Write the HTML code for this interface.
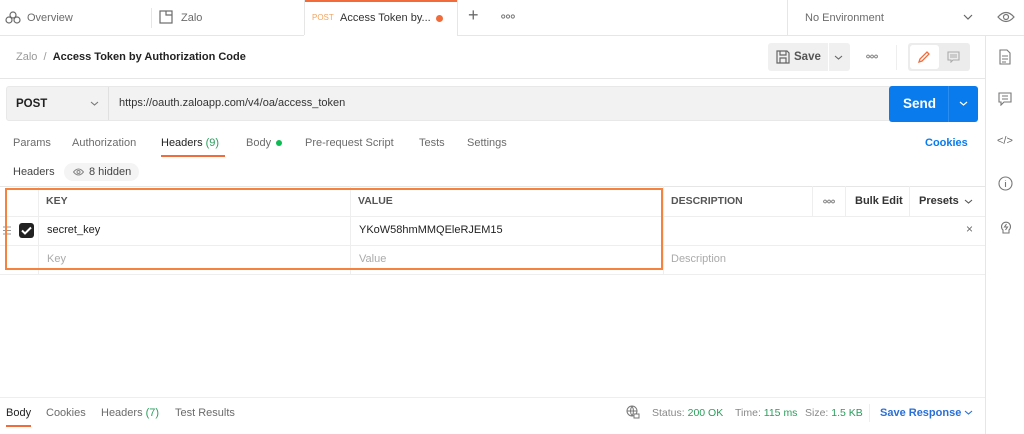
<!DOCTYPE html>
<html><head><style>
*{box-sizing:border-box;margin:0;padding:0}
body{width:1024px;height:434px;background:#fff;font-family:"Liberation Sans",sans-serif;font-size:11px;color:#212121;position:relative;overflow:hidden}
.a{position:absolute}
.g{color:#6b6b6b}
.hl{position:absolute;height:1px;background:#e6e6e6}
.vl{position:absolute;width:1px;background:#e6e6e6}
</style></head><body>
<!-- top tabs -->
<div class="hl" style="left:0;top:35px;width:1024px"></div>
<div class="vl" style="left:151px;top:8px;height:20px"></div>
<div class="vl" style="left:304px;top:0;height:35px"></div>
<div class="vl" style="left:457px;top:0;height:35px"></div>
<div class="vl" style="left:787px;top:0;height:35px"></div>
<div class="a" style="left:305px;top:0;width:152px;height:2px;background:#f26b3a"></div>
<div class="a" style="left:304px;top:35px;width:153px;height:1px;background:#fff"></div>
<svg class="a" style="left:5px;top:11px" width="16" height="14" viewBox="0 0 16 14" fill="none" stroke="#6b6b6b" stroke-width="1.2"><circle cx="4" cy="9" r="3"/><circle cx="12" cy="9" r="3"/><circle cx="8" cy="4" r="3"/></svg>
<div class="a g" style="left:27px;top:12px;font-size:11px">Overview</div>
<svg class="a" style="left:159px;top:10px" width="14" height="14" viewBox="0 0 14 14" fill="none" stroke="#6b6b6b" stroke-width="1.2"><rect x="1" y="1" width="12" height="12"/><path d="M7 1v4h6"/></svg>
<div class="a g" style="left:181px;top:12px">Zalo</div>
<div class="a" style="left:312px;top:13px;font-size:8px;color:#f5a45e">POST</div>
<div class="a" style="left:340px;top:12px;color:#333">Access Token by...</div>
<div class="a" style="left:436px;top:15px;width:7px;height:7px;border-radius:50%;background:#f26b3a"></div>
<div class="a g" style="left:468px;top:5px;font-size:18px;font-weight:300">+</div>
<svg class="a" style="left:501px;top:14px" width="14" height="5" viewBox="0 0 14 5" fill="none" stroke="#777" stroke-width="1"><circle cx="2.2" cy="2.5" r="1.6"/><circle cx="7" cy="2.5" r="1.6"/><circle cx="11.8" cy="2.5" r="1.6"/></svg>
<div class="a g" style="left:805px;top:12px">No Environment</div>
<svg class="a" style="left:963px;top:14px" width="10" height="6" viewBox="0 0 10 6" fill="none" stroke="#666" stroke-width="1.2"><path d="M1 1l4 4 4-4"/></svg>
<svg class="a" style="left:997px;top:11px" width="18" height="12" viewBox="0 0 18 12" fill="none" stroke="#777" stroke-width="1.2"><path d="M1 6Q9-3 17 6Q9 15 1 6z"/><circle cx="9" cy="6" r="2.5"/></svg>
<!-- right sidebar -->
<div class="vl" style="left:985px;top:35px;height:399px"></div>
<svg class="a" style="left:999px;top:49px" width="12" height="16" viewBox="0 0 12 16" fill="none" stroke="#777" stroke-width="1.1"><path d="M1 1h7l3 3v11H1z"/><path d="M3 7h6M3 10h6M3 13h4"/></svg>
<svg class="a" style="left:998px;top:92px" width="14" height="14" viewBox="0 0 14 14" fill="none" stroke="#777" stroke-width="1.1"><path d="M1 1h12v9H6l-3 3v-3H1z"/><path d="M4 4h6M4 7h6"/></svg>
<div class="a g" style="left:997px;top:135px;font-size:11px">&lt;/&gt;</div>
<svg class="a" style="left:998px;top:176px" width="15" height="15" viewBox="0 0 15 15" fill="none" stroke="#777" stroke-width="1.1"><circle cx="7.5" cy="7.5" r="6.5"/><path d="M7.5 6v5M7.5 4v.5"/></svg>
<svg class="a" style="left:998px;top:219px" width="16" height="16" viewBox="0 0 16 16" fill="none" stroke="#777" stroke-width="1.1"><path d="M5 11a4.5 4.5 0 1 1 6 0v3H5z"/><path d="M8.5 5l-2 3h3l-2 3"/></svg>
<!-- breadcrumb -->
<div class="a" style="left:16px;top:51px;font-size:11px"><span style="color:#999">Zalo</span> <span style="color:#999">&nbsp;/&nbsp;</span> <b style="color:#222">Access Token by Authorization Code</b></div>
<div class="a" style="left:768px;top:43px;width:82px;height:28px;background:#f0f0f0;border-radius:3px"></div>
<div class="vl" style="left:828px;top:43px;height:28px;background:#fff"></div>
<svg class="a" style="left:776px;top:50px" width="14" height="14" viewBox="0 0 14 14" fill="none" stroke="#666" stroke-width="1.2"><path d="M1 1h10l2 2v10H1z"/><path d="M4 1v4h6V1M4 13V8h6v5"/></svg>
<div class="a" style="left:794px;top:51px;font-weight:bold;color:#555;font-size:11.5px">Save</div>
<svg class="a" style="left:834px;top:55px" width="9" height="5" viewBox="0 0 9 5" fill="none" stroke="#666" stroke-width="1.1"><path d="M1 1l3.5 3 3.5-3"/></svg>
<svg class="a" style="left:866px;top:54px" width="12" height="5" viewBox="0 0 12 5" fill="none" stroke="#777" stroke-width="0.9"><circle cx="2" cy="2.5" r="1.4"/><circle cx="6" cy="2.5" r="1.4"/><circle cx="10" cy="2.5" r="1.4"/></svg>
<div class="vl" style="left:896px;top:45px;height:25px;background:#eee"></div>
<div class="a" style="left:908px;top:43px;width:62px;height:28px;background:#ececec;border-radius:3px"></div>
<div class="a" style="left:910px;top:45px;width:29px;height:24px;background:#fff;border-radius:3px"></div>
<svg class="a" style="left:917px;top:50px" width="14" height="14" viewBox="0 0 14 14" fill="none" stroke="#f26b3a" stroke-width="1.3"><path d="M2 12l1-3 7-7 2 2-7 7z"/></svg>
<svg class="a" style="left:947px;top:51px" width="13" height="12" viewBox="0 0 13 12" fill="none" stroke="#aaa" stroke-width="1.1"><path d="M1 1h11v8H6l-2 2V9H1z"/><path d="M3 4h7M3 6h7"/></svg>
<div class="hl" style="left:0;top:78px;width:985px"></div>
<!-- URL bar -->
<div class="a" style="left:6px;top:86px;width:964px;height:35px;background:#f2f2f2;border:1px solid #e8e8e8;border-radius:3px"></div>
<div class="vl" style="left:108px;top:87px;height:33px;background:#e0e0e0"></div>
<div class="a" style="left:16px;top:98px;font-weight:bold;font-size:11.5px">POST</div>
<svg class="a" style="left:90px;top:101px" width="9" height="5" viewBox="0 0 9 5" fill="none" stroke="#777" stroke-width="1.1"><path d="M1 1l3.5 3 3.5-3"/></svg>
<div class="a" style="left:119px;top:97px;font-size:11px;color:#333">https://oauth.zaloapp.com/v4/oa/access_token</div>
<div class="a" style="left:889px;top:86px;width:89px;height:36px;background:#097bed;border-radius:3px"></div>
<div class="vl" style="left:948px;top:86px;height:36px;background:#2a8ef0"></div>
<div class="a" style="left:903px;top:96px;color:#fff;font-weight:bold;font-size:13.5px">Send</div>
<svg class="a" style="left:959px;top:101px" width="9" height="5" viewBox="0 0 9 5" fill="none" stroke="#fff" stroke-width="1.2"><path d="M1 1l3.5 3 3.5-3"/></svg>
<!-- request tabs -->
<div class="a g" style="left:13px;top:137px;font-size:11px">Params</div>
<div class="a g" style="left:72px;top:137px">Authorization</div>
<div class="a" style="left:161px;top:137px;color:#222">Headers <span style="color:#2a9d5c">(9)</span></div>
<div class="a" style="left:161px;top:155px;width:64px;height:2px;background:#f26b3a"></div>
<div class="a g" style="left:246px;top:137px">Body</div>
<div class="a" style="left:276px;top:140px;width:6px;height:6px;border-radius:50%;background:#0cbb52"></div>
<div class="a g" style="left:305px;top:137px">Pre-request Script</div>
<div class="a g" style="left:419px;top:137px">Tests</div>
<div class="a g" style="left:467px;top:137px">Settings</div>
<div class="a" style="left:925px;top:137px;color:#097bed;font-weight:bold">Cookies</div>
<div class="a" style="left:13px;top:166px;color:#444">Headers</div>
<div class="a" style="left:64px;top:163px;width:75px;height:18px;background:#f4f4f4;border-radius:9px"></div>
<svg class="a" style="left:73px;top:168px" width="11" height="8" viewBox="0 0 11 8" fill="none" stroke="#888" stroke-width="1"><path d="M.5 4Q5.5-2 10.5 4Q5.5 10 .5 4z"/><circle cx="5.5" cy="4" r="1.5"/></svg>
<div class="a" style="left:89px;top:166px;color:#444">8 hidden</div>
<!-- table -->
<div class="hl" style="left:0;top:186px;width:985px"></div>
<div class="hl" style="left:0;top:216px;width:985px;background:#eee"></div>
<div class="hl" style="left:0;top:245px;width:985px;background:#eee"></div>
<div class="hl" style="left:0;top:274px;width:985px;background:#eee"></div>
<div class="vl" style="left:38px;top:186px;height:88px;background:#eee"></div>
<div class="vl" style="left:350px;top:186px;height:88px;background:#eee"></div>
<div class="vl" style="left:663px;top:186px;height:88px;background:#eee"></div>
<div class="vl" style="left:812px;top:186px;height:30px;background:#eee"></div>
<div class="vl" style="left:845px;top:186px;height:30px;background:#eee"></div>
<div class="vl" style="left:909px;top:186px;height:30px;background:#eee"></div>
<div class="a" style="left:46px;top:195px;font-weight:bold;color:#555;font-size:10.5px">KEY</div>
<div class="a" style="left:358px;top:195px;font-weight:bold;color:#555;font-size:10.5px">VALUE</div>
<div class="a" style="left:671px;top:195px;font-weight:bold;color:#555;font-size:10.5px">DESCRIPTION</div>
<svg class="a" style="left:823px;top:199px" width="12" height="5" viewBox="0 0 12 5" fill="none" stroke="#777" stroke-width="0.9"><circle cx="2" cy="2.5" r="1.4"/><circle cx="6" cy="2.5" r="1.4"/><circle cx="10" cy="2.5" r="1.4"/></svg>
<div class="a" style="left:855px;top:195px;font-weight:bold;color:#333">Bulk Edit</div>
<div class="a" style="left:919px;top:195px;font-weight:bold;color:#333">Presets</div>
<svg class="a" style="left:964px;top:199px" width="9" height="5" viewBox="0 0 9 5" fill="none" stroke="#555" stroke-width="1.1"><path d="M1 1l3.5 3 3.5-3"/></svg>
<svg class="a" style="left:2px;top:226px" width="10" height="9" viewBox="0 0 10 9" fill="none" stroke="#999" stroke-width="1"><path d="M1 1h8M1 4.5h8M1 8h8"/></svg>
<div class="a" style="left:19px;top:223px;width:15px;height:15px;background:#222;border-radius:3px"></div>
<svg class="a" style="left:21px;top:226px" width="11" height="9" viewBox="0 0 11 9" fill="none" stroke="#fff" stroke-width="2"><path d="M1 4.5l3 3 6-6"/></svg>
<div class="a" style="left:47px;top:224px;color:#222">secret_key</div>
<div class="a" style="left:359px;top:224px;color:#222">YKoW58hmMMQEleRJEM15</div>
<div class="a g" style="left:966px;top:222px;font-size:12px">×</div>
<div class="a" style="left:47px;top:253px;color:#aaa">Key</div>
<div class="a" style="left:359px;top:253px;color:#aaa">Value</div>
<div class="a" style="left:671px;top:253px;color:#aaa">Description</div>
<div class="a" style="left:5px;top:188px;width:658px;height:82px;border:2px solid #f5823e"></div>
<!-- bottom -->
<div class="hl" style="left:0;top:397px;width:985px;background:#eee"></div>
<div class="a" style="left:6px;top:407px;color:#222">Body</div>
<div class="a" style="left:6px;top:425px;width:25px;height:2px;background:#f26b3a"></div>
<div class="a g" style="left:46px;top:407px">Cookies</div>
<div class="a g" style="left:101px;top:407px">Headers <span style="color:#2a9d5c">(7)</span></div>
<div class="a g" style="left:175px;top:407px">Test Results</div>
<svg class="a" style="left:626px;top:405px" width="14" height="14" viewBox="0 0 14 14" fill="none" stroke="#777" stroke-width="1"><circle cx="6" cy="6" r="5"/><path d="M1 6h10M6 1q-3 5 0 10M6 1q3 5 0 10"/><rect x="8" y="9" width="5" height="4" fill="#fff"/></svg>
<div class="a" style="left:652px;top:407px;color:#888;font-size:10.5px">Status: <span style="color:#2a9d5c">200 OK</span></div>
<div class="a" style="left:735px;top:407px;color:#888;font-size:10.5px">Time: <span style="color:#2a9d5c">115 ms</span></div>
<div class="a" style="left:805px;top:407px;color:#888;font-size:10.5px">Size: <span style="color:#2a9d5c">1.5 KB</span></div>
<div class="vl" style="left:869px;top:404px;height:18px;background:#eee"></div>
<div class="a" style="left:880px;top:407px;color:#2a6fd6;font-weight:bold">Save Response</div>
<svg class="a" style="left:964px;top:410px" width="9" height="5" viewBox="0 0 9 5" fill="none" stroke="#2a6fd6" stroke-width="1.1"><path d="M1 1l3.5 3 3.5-3"/></svg>
</body></html>
